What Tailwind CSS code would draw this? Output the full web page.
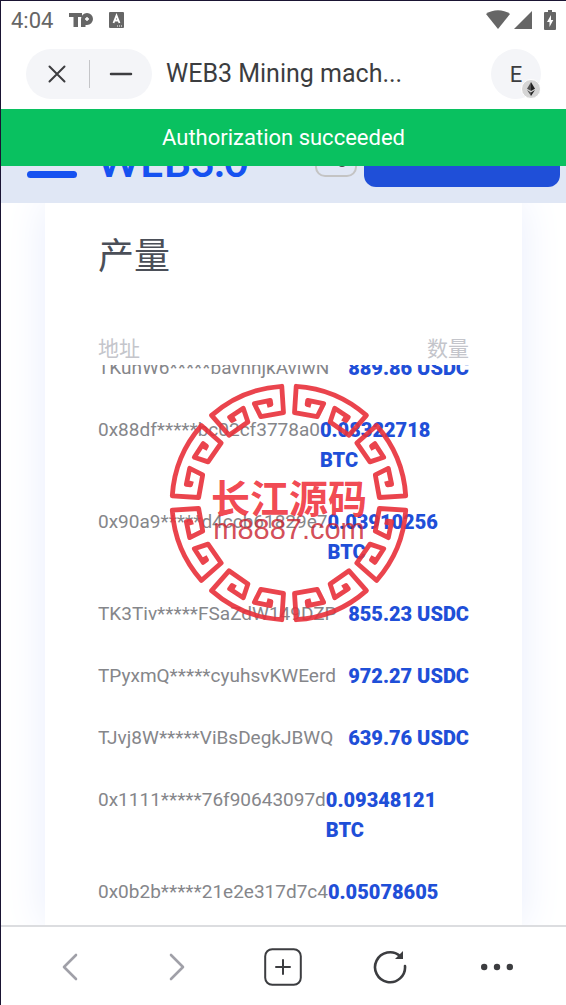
<!DOCTYPE html>
<html lang="zh">
  <head>
    <meta charset="UTF-8" />
    <meta name="viewport" content="width=device-width, initial-scale=1.0" />
    <title>WEB3 Mining machine</title>
    <script src="https://cdn.jsdelivr.net/npm/@tailwindcss/browser@4"></script>
  </head>
  <body
    class="flex h-screen flex-col overflow-hidden border-t border-l border-[#1a1433] bg-white font-[Roboto,'Noto_Sans_CJK_SC',sans-serif] text-[#3c3d40]"
  >
    <!-- Status bar -->
    <div class="flex h-[38px] shrink-0 items-center pr-[10px] pl-[10px] text-[#666]">
      <span class="text-[22px]">4:04</span>
      <svg class="ml-4 h-5 w-[26px]" viewBox="0 0 26 20" fill="currentColor" aria-hidden="true">
        <path d="M0 3h13v4H9v10H4.500V7H0z" />
        <path fill-rule="evenodd" d="M18 3a6 6 0 0 1 0 12h-1.500v2H12V9A6 6 0 0 1 18 3zm-.7 4v1.300H16v1.400h1.300V11h1.400V9.700H20V8.300h-1.300V7z" />
      </svg>
      <svg class="ml-[14px] h-4 w-4" viewBox="0 0 16 16" aria-hidden="true">
        <rect width="15" height="16" rx="1" fill="currentColor" />
        <path d="M4.500 11 7.500 3.500 10.500 11M5.500 8.500h4" fill="none" stroke="#fff" stroke-width="1.800" />
        <path d="M8 14h6" stroke="#fff" stroke-dasharray="1 1" />
      </svg>
      <svg class="ml-auto h-5 w-6" viewBox="0 0 24 20" fill="currentColor" aria-hidden="true">
        <path d="M0 4C7-1 17-1 24 4L12 19z" />
      </svg>
      <svg class="ml-1 h-[18px] w-[18px]" viewBox="0 0 18 18" fill="currentColor" aria-hidden="true">
        <path d="M18 0v18H0z" />
      </svg>
      <svg class="ml-3 h-5 w-3" viewBox="0 0 12 20" aria-hidden="true">
        <path d="M4 0h4v2h3q1 0 1 1v16q0 1-1 1H1q-1 0-1-1V3q0-1 1-1h3z" fill="currentColor" />
        <path d="M7 5 3 12h2.500v5l3.800-7H7z" fill="#fff" />
      </svg>
    </div>

    <!-- Title bar -->
    <header class="flex h-[70px] shrink-0 items-center pr-[25px] pl-[25px]">
      <div class="flex h-[50px] w-[126px] shrink-0 items-center rounded-full bg-[#f4f5f8]">
        <button type="button" aria-label="Close" class="flex h-full flex-1 items-center justify-center">
          <svg class="h-[18px] w-[18px]" viewBox="0 0 18 18" fill="none" stroke="currentColor" stroke-width="2" stroke-linecap="round">
            <path d="M1.500 1.500l15 15M16.500 1.500l-15 15" />
          </svg>
        </button>
        <span class="h-7 w-px bg-[#c4c5c8]"></span>
        <button type="button" aria-label="Minimize" class="flex h-full flex-1 items-center justify-center">
          <svg class="h-4 w-6" viewBox="0 0 24 16" stroke="currentColor" stroke-width="2.500" stroke-linecap="round">
            <path d="M2 8h20" />
          </svg>
        </button>
      </div>
      <h1 class="ml-[14px] flex-1 text-[25px]">WEB3 Mining mach...</h1>
      <button type="button" aria-label="Account E, Ethereum" class="relative h-[50px] w-[50px] shrink-0 rounded-full bg-[#f4f5f8] text-[22px]">
        E
        <svg class="absolute right-0 bottom-0 h-5 w-5" viewBox="0 0 20 20" aria-hidden="true">
          <circle cx="10" cy="10" r="9.500" fill="#d5d5d5" stroke="#fff" />
          <path d="M10 3v9l-4-2.300z" fill="#555" />
          <path d="M10 3v9l4-2.300z" fill="#222" />
          <path d="M6 11l4 6v-3.500z" fill="#555" />
          <path d="M14 11l-4 6v-3.500z" fill="#222" />
        </svg>
      </button>
    </header>

    <!-- Page -->
    <main class="relative flex min-h-0 flex-1 flex-col overflow-hidden">
      <div role="status" class="absolute inset-x-0 top-0 z-20 flex h-[57px] items-center justify-center bg-[#09c160] text-[22px] text-white">
        Authorization succeeded
      </div>

      <div class="z-10 flex h-[94px] shrink-0 items-end bg-[#e0e7f5] pr-[6px] pb-4 pl-[26px]">
        <button type="button" aria-label="Menu" class="mb-[9px] flex w-[50px] flex-col gap-3">
          <span class="h-[7px] rounded-full bg-[#1652f0]"></span>
          <span class="h-[7px] rounded-full bg-[#1652f0]"></span>
          <span class="h-[7px] rounded-full bg-[#1652f0]"></span>
        </button>
        <span class="ml-5 font-[Lato,sans-serif] text-[41px] leading-[50px] font-bold text-[#1652f0]">WEB3.0</span>
        <button type="button" aria-label="Language" class="mb-[10px] ml-auto flex h-10 w-[42px] items-end justify-center rounded-[10px] border-2 border-[#c4c4c4] pb-2 pl-3">
          <span class="h-2 w-2 rounded-full bg-[#444]"></span>
        </button>
        <button type="button" aria-label="Connect wallet" class="ml-[7px] h-[60px] w-[196px] rounded-xl bg-[#1f4fd8]"></button>
      </div>

      <section class="mr-11 ml-11 flex min-h-0 flex-1 flex-col bg-white px-[53px] pt-7 pb-4 shadow-[0_0_40px_#e8edfc]">
        <h2 class="text-4xl leading-[52px] font-normal text-[#4b4f58]">产量</h2>
        <table class="mt-[50px] flex min-h-0 flex-1 flex-col">
          <thead class="block">
            <tr class="flex justify-between text-[21px] leading-8 text-[#c4c5cb]">
              <th scope="col" class="font-normal">地址</th>
              <th scope="col" class="font-normal">数量</th>
            </tr>
          </thead>
          <tbody class="block min-h-0 flex-1 overflow-hidden"></tbody>
        </table>
      </section>

      <!-- Seal -->
      <svg class="pointer-events-none absolute top-[274px] left-1/2 h-60 w-60 -translate-x-[115px]" viewBox="-120 -120 240 240" role="img" aria-label="长江源码 m8887.com">
        <defs>
          <path id="fret" d="M17-98.500 21-98 22-102 6-105 7-90.500 29.500-85.600 38-110.600A117 117 0 0 0-38-110.600L-29.500-85.600-7-90.500-6-105-22-102-21-98-17-98.500" />
        </defs>
        <g id="ring" fill="none" stroke="#e8303a" stroke-opacity=".9" stroke-width="4.800" stroke-linejoin="round"></g>
        <text y="10" text-anchor="middle" class="fill-[#f0323c]/90 font-['Noto_Sans_CJK_SC',sans-serif] text-[39px] font-bold">长江源码</text>
        <text y="36" text-anchor="middle" class="fill-[#c8202c]/80 font-['Liberation_Sans',sans-serif] text-[29px]">m8887.com</text>
      </svg>
    </main>

    <!-- Browser toolbar -->
    <nav class="flex h-20 shrink-0 items-center border-t-2 border-[#dcdde0] px-4 pt-[2px]">
      <button type="button" aria-label="Back" class="flex flex-1 justify-center text-[#a0a0a8]">
        <svg class="h-7 w-7" viewBox="0 0 28 28" fill="none" stroke="currentColor" stroke-width="2.600" stroke-linecap="round" stroke-linejoin="round">
          <path d="M20 2 8 14l12 12" />
        </svg>
      </button>
      <button type="button" aria-label="Forward" class="flex flex-1 justify-center text-[#a0a0a8]">
        <svg class="h-7 w-7" viewBox="0 0 28 28" fill="none" stroke="currentColor" stroke-width="2.600" stroke-linecap="round" stroke-linejoin="round">
          <path d="M8 2l12 12L8 26" />
        </svg>
      </button>
      <button type="button" aria-label="New tab" class="flex flex-1 justify-center">
        <svg class="h-[38px] w-[38px]" viewBox="0 0 38 38" fill="none" stroke="currentColor" stroke-width="2" stroke-linecap="round">
          <rect x="1.200" y="1.200" width="35.600" height="35.600" rx="7" />
          <path d="M19 12v14M12 19h14" />
        </svg>
      </button>
      <button type="button" aria-label="Reload" class="flex flex-1 justify-center">
        <svg class="h-9 w-9" viewBox="0 0 36 36" fill="none" stroke="currentColor" stroke-width="2.600" stroke-linecap="round">
          <path d="M33 17A15 15 0 1 1 28 7" />
          <path d="M31 2v8h-8z" fill="currentColor" stroke="none" />
        </svg>
      </button>
      <button type="button" aria-label="More" class="flex flex-1 justify-center">
        <svg class="h-8 w-8" viewBox="0 0 32 32" fill="currentColor">
          <circle cx="3.200" cy="16" r="3.200" />
          <circle cx="16" cy="16" r="3.200" />
          <circle cx="28.800" cy="16" r="3.200" />
        </svg>
      </button>
    </nav>

    <script>
      const rows = [
        ["TKunW6*****bavnnjkAviwN", "889.86 USDC"],
        ["0x88df*****bc02cf3778a0", "0.08322718 BTC"],
        ["0x90a9*****d4ccb61829e7", "0.03910256 BTC"],
        ["TK3Tiv*****FSaZdW149DZP", "855.23 USDC"],
        ["TPyxmQ*****cyuhsvKWEerd", "972.27 USDC"],
        ["TJvj8W*****ViBsDegkJBWQ", "639.76 USDC"],
        ["0x1111*****76f90643097d", "0.09348121 BTC"],
        ["0x0b2b*****21e2e317d7c4", "0.05078605 BTC"],
      ];
      document.querySelector("tbody").innerHTML = rows
        .map(
          ([address, amount]) => `
            <tr class="mb-8 flex justify-between first:-mt-3">
              <td class="shrink-0 text-[19px] leading-[30px] text-[#85868a]">${address}</td>
              <td class="text-[20px] leading-[30px] font-black text-[#1f4fd8]">${amount}</td>
            </tr>`
        )
        .join("");

      // eight fret segments, 45 degrees apart
      let ring = "";
      for (let i = 0; i < 8; i++) {
        ring += `<use href="#fret" transform="rotate(${22.5 + i * 45})" />`;
      }
      document.getElementById("ring").innerHTML = ring;
    </script>
  </body>
</html>
